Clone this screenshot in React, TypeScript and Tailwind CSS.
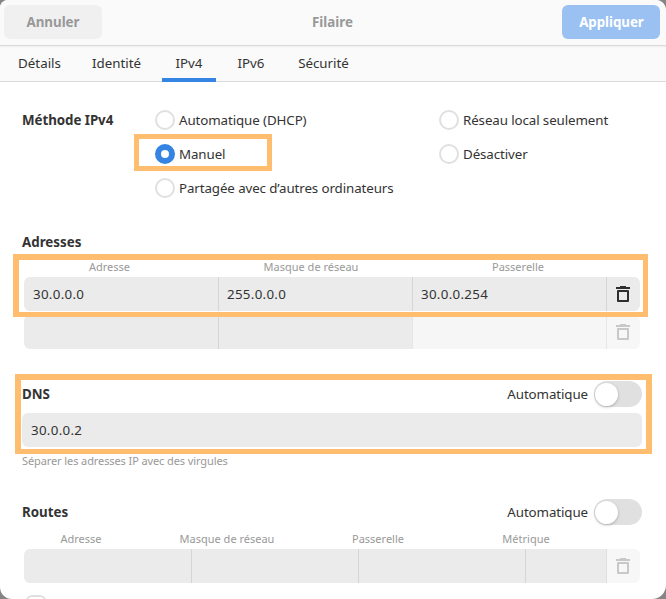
import clsx from 'clsx';

interface Tab {
  label: string;
  className: string;
}

const TABS: Tab[] = [
  { label: 'Détails', className: 'w-[69px]' },
  { label: 'Identité', className: 'ml-[5px] w-[75px]' },
  { label: 'IPv4', className: 'ml-2 w-[54px]' },
  { label: 'IPv6', className: 'ml-2 w-[54px]' },
  { label: 'Sécurité', className: 'ml-[7px] w-[77px]' },
];

function TrashIcon() {
  return (
    <svg width="14" height="16" viewBox="0 0 14 16" fill="none">
      <path d="M4 0h6v1h4v2H0V1h4z" fill="currentColor" />
      <path d="M2 5h10v10H2z" stroke="currentColor" strokeWidth="2" strokeLinejoin="round" />
    </svg>
  );
}

function Radio({ label, checked = false }: { label: string; checked?: boolean }) {
  return (
    <label className="flex h-5 items-center gap-1 tracking-[-0.1px] whitespace-nowrap">
      <span
        className={clsx(
          'size-5 shrink-0 rounded-full bg-white',
          checked ? 'border-[6px] border-[#3584e4]' : 'border-2 border-[#e0e0e0]',
        )}
      />
      {label}
    </label>
  );
}

function AutoSwitch() {
  return (
    <div className="flex items-center gap-[6px]">
      <span className="tracking-[-0.1px]">Automatique</span>
      <button type="button" className="flex h-[26px] w-12 items-center rounded-full bg-[#e0e0e0] px-px">
        <span className="size-[23px] rounded-full bg-white shadow-[0_1px_3px_rgba(0,0,0,0.25)]" />
      </button>
    </div>
  );
}

function Cell({ value, className }: { value?: string; className?: string }) {
  return (
    <div className={clsx('flex items-center border-r tracking-[0.3px]', className)}>
      {value}
    </div>
  );
}

function DeleteCell({ disabled = false }: { disabled?: boolean }) {
  return (
    <button
      type="button"
      disabled={disabled}
      className={clsx(
        'flex flex-1 items-center pl-[9px]',
        disabled ? 'bg-[#f7f7f7] text-[#c8c8c8]' : 'bg-[#ebebeb] text-[#2e2e2e]',
      )}
    >
      <TrashIcon />
    </button>
  );
}

// Orange marker drawn over the settings to look at
function Highlight({ className }: { className: string }) {
  return <div className={clsx('pointer-events-none absolute border-[#ffbe6f]', className)} />;
}

export default function App() {
  return (
    <div className="h-[599px] w-[666px] overflow-hidden bg-[#858585] font-['Noto_Sans',sans-serif] text-[13.33px] leading-5 text-[#333333]">
      <div className="relative h-full overflow-hidden rounded-tl-[8px] rounded-tr-[10px] rounded-br-[14px] rounded-bl-[12px] bg-white">
        {/* Header bar */}
        <header className="flex h-[46px] items-start justify-between border-b border-[#dadada] bg-[#fafafa] pt-[5px] pr-[6px] pl-1 font-bold">
          <button type="button" className="h-[34px] w-[98px] rounded-[6px] bg-[#f0f0f0] text-[#989898]">
            Annuler
          </button>
          <h1 className="pl-px leading-[34px] text-[#989898]">Filaire</h1>
          <button type="button" className="h-[34px] w-[98px] rounded-[6px] bg-[#9ac1f1] pl-px tracking-[-0.05px] text-white">
            Appliquer
          </button>
        </header>

        {/* Tabs */}
        <nav className="flex h-9 border-b border-[#dadada] bg-[#fafafa] pl-[5px] shadow-[inset_0_2px_2px_-1px_rgba(0,0,0,0.05)]">
          {TABS.map((tab) => (
            <button
              key={tab.label}
              type="button"
              className={clsx(
                'h-9 border-b-4 pt-px text-center',
                tab.label === 'IPv4' ? 'border-[#3584e4]' : 'border-transparent',
                tab.className,
              )}
            >
              {tab.label}
            </button>
          ))}
        </nav>

        <main className="pt-7 pr-6 pl-[22px]">
          {/* Method */}
          <section className="flex">
            <h2 className="w-[133px] font-bold tracking-[-0.05px]">Méthode IPv4</h2>
            <div className="grid grid-cols-[284px_auto] gap-y-[14px]">
              <Radio label="Automatique (DHCP)" />
              <Radio label="Réseau local seulement" />
              <Radio label="Manuel" checked />
              <Radio label="Désactiver" />
              <Radio label="Partagée avec d’autres ordinateurs" />
            </div>
          </section>

          {/* Addresses */}
          <section className="mt-[34px]">
            <h2 className="font-bold">Adresses</h2>
            <div className="flex h-[25px] pt-[5px] pl-0.5 text-center text-[11px] text-[#999999]">
              <span className="w-[171px]">Adresse</span>
              <span className="ml-[23px] w-[186px]">Masque de réseau</span>
              <span className="ml-[14px] w-[200px]">Passerelle</span>
            </div>
            <div className="mx-0.5 flex h-[34px] overflow-hidden rounded-[6px]">
              <Cell value="30.0.0.0" className="w-[195px] border-[#d5d5d5] bg-[#ebebeb] pl-[9px]" />
              <Cell value="255.0.0.0" className="w-[194px] border-[#d5d5d5] bg-[#ebebeb] pl-2" />
              <Cell value="30.0.0.254" className="w-[194px] border-[#d5d5d5] bg-[#ebebeb] pl-2" />
              <DeleteCell />
            </div>
            <div className="mx-0.5 mt-1 flex h-[34px] overflow-hidden rounded-[6px]">
              <Cell className="w-[195px] border-[#d5d5d5] bg-[#ebebeb]" />
              <Cell className="w-[194px] border-[#e6e6e6] bg-[#ebebeb]" />
              <Cell className="w-[194px] border-[#e6e6e6] bg-[#f6f6f6]" />
              <DeleteCell disabled />
            </div>
          </section>

          {/* DNS */}
          <section className="mt-8">
            <div className="flex h-[26px] items-center justify-between">
              <h2 className="font-bold">DNS</h2>
              <AutoSwitch />
            </div>
            <div className="mt-1.5 flex h-[34px] items-center rounded-[6px] bg-[#ebebeb] pl-[9px] tracking-[0.3px]">
              30.0.0.2
            </div>
            <p className="mt-1 text-[11px] tracking-[-0.1px] text-[#999999]">
              Séparer les adresses IP avec des virgules
            </p>
          </section>

          {/* Routes */}
          <section className="mt-7">
            <div className="flex h-[26px] items-center justify-between">
              <h2 className="font-bold">Routes</h2>
              <AutoSwitch />
            </div>
            <div className="flex h-6 pt-1 pl-0.5 text-center text-[11px] text-[#999999]">
              <span className="w-[114px]">Adresse</span>
              <span className="ml-[29px] w-[120px]">Masque de réseau</span>
              <span className="ml-[34px] w-[114px]">Passerelle</span>
              <span className="ml-[31px] w-[120px]">Métrique</span>
            </div>
            <div className="mx-0.5 flex h-[34px] overflow-hidden rounded-[6px]">
              <Cell className="w-[168px] border-[#d5d5d5] bg-[#ebebeb]" />
              <Cell className="w-[167px] border-[#d5d5d5] bg-[#ebebeb]" />
              <Cell className="w-[167px] border-[#d5d5d5] bg-[#ebebeb]" />
              <Cell className="w-[81px] border-[#e0e0e0] bg-[#ebebeb]" />
              <DeleteCell disabled />
            </div>
            <div className="mt-3 ml-1 size-5 rounded-[6px] border-2 border-[#e0e0e0]" />
          </section>
        </main>

        <Highlight className="top-[134px] left-[134px] h-[37px] w-[138px] border-5" />
        <Highlight className="top-[254px] left-[13px] h-[63px] w-[635px] border-t-6 border-r-5 border-b-5 border-l-6" />
        <Highlight className="top-[374px] left-[15px] h-[80px] w-[637px] border-t-6 border-r-6 border-b-5 border-l-6" />
      </div>
    </div>
  );
}
